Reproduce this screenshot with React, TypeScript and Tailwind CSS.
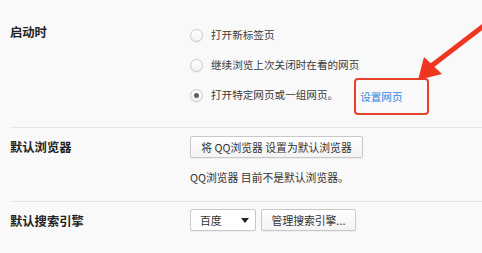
import React from 'react';

const font = { fontFamily: '"Noto Sans CJK SC", "Noto Sans", sans-serif' };

const Radio = ({ checked }: { checked?: boolean }) => (
  <span className="w-[13px] h-[13px] rounded-full border border-[#c9c9c9] bg-gradient-to-b from-[#ffffff] to-[#f2f2f2] shadow-[0_1px_1px_rgba(0,0,0,0.05)] flex items-center justify-center shrink-0">
    {checked && <span className="w-[5px] h-[5px] rounded-full bg-[#5f5f5f]" />}
  </span>
);

const Btn = ({ children, className = '' }: { children: React.ReactNode; className?: string }) => (
  <div
    className={`h-[22px] flex items-center border border-[#c8c8c8] rounded-[2px] bg-gradient-to-b from-[#ffffff] to-[#f3f3f3] shadow-[0_1px_0_rgba(0,0,0,0.04)] text-[10.8px] text-[#333] ${className}`}
  >
    {children}
  </div>
);

const App = () => {
  return (
    <div style={font} className="relative w-[482px] h-[253px] overflow-hidden bg-[#f9f9f9] pl-[10px]">
      {/* 启动时 */}
      <div className="flex pt-[20px] pb-[17px] border-b border-[#e6e6e6]">
        <div className="w-[180px] mt-[4px] leading-[16px] text-[12.3px] font-bold text-[#222]">启动时</div>
        <div className="flex flex-col text-[10.6px] text-[#3a3a3a]">
          <div className="h-[30px] flex items-center gap-[8px]">
            <Radio />
            <span>打开新标签页</span>
          </div>
          <div className="h-[30px] flex items-center gap-[8px]">
            <Radio />
            <span>继续浏览上次关闭时在看的网页</span>
          </div>
          <div className="h-[30px] flex items-center gap-[8px]">
            <Radio checked />
            <span>打开特定网页或一组网页。</span>
            <span className="relative ml-[14px] mt-[3px] text-[#2f86e0]">
              设置网页
              <span className="absolute left-[-6px] right-[-26px] top-[-11px] bottom-[-11px] border-2 border-[#e8412b] rounded-[4px]" />
            </span>
          </div>
        </div>
      </div>

      {/* 默认浏览器 */}
      <div className="flex pt-[8px] pb-[16px] border-b border-[#e6e6e6]">
        <div className="w-[180px] mt-[3px] leading-[16px] text-[12.3px] font-bold text-[#222]">默认浏览器</div>
        <div className="flex flex-col items-start">
          <Btn className="w-[173px] justify-center">将 QQ浏览器 设置为默认浏览器</Btn>
          <div className="mt-[11px] leading-[16px] text-[10.8px] text-[#333]">QQ浏览器 目前不是默认浏览器。</div>
        </div>
      </div>

      {/* 默认搜索引擎 */}
      <div className="flex pt-[7px]">
        <div className="w-[180px] mt-[4px] leading-[16px] text-[12.3px] font-bold text-[#222]">默认搜索引擎</div>
        <div className="flex gap-[5px]">
          <Btn className="w-[66px] pl-[9px] pr-[6px] justify-between bg-none bg-white">
            <span>百度</span>
            <svg width="8" height="5" viewBox="0 0 8 5">
              <path d="M0 0 L8 0 L4 5 Z" fill="#222" />
            </svg>
          </Btn>
          <Btn className="w-[95px] justify-center">管理搜索引擎...</Btn>
        </div>
      </div>

      {/* annotation arrow */}
      <svg className="absolute left-0 top-0 pointer-events-none" width="482" height="253" viewBox="0 0 482 253">
        <line x1="486" y1="24" x2="430" y2="67" stroke="#ee3621" strokeWidth="5" strokeLinecap="round" />
        <polygon points="418,80 424,57 442,74" fill="#ee3621" />
      </svg>
    </div>
  );
};

export default App;
